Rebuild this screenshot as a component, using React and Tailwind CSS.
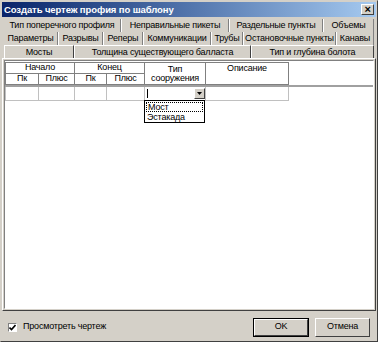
import React from 'react';

const font = { fontFamily: '"Liberation Sans", Arial, sans-serif' };

const row1 = [
    { label: 'Тип поперечного профиля', w: 117 },
    { label: 'Неправильные пикеты', w: 108 },
    { label: 'Раздельные пункты', w: 94 },
    { label: 'Объемы', w: 51 },
];
const row2 = [
    { label: 'Параметры', w: 54 },
    { label: 'Разрывы', w: 45 },
    { label: 'Реперы', w: 40 },
    { label: 'Коммуникации', w: 68 },
    { label: 'Трубы', w: 32 },
    { label: 'Остановочные пункты', w: 93 },
    { label: 'Канавы', w: 38 },
];
const row3 = [
    { label: 'Мосты', w: 70, active: true },
    { label: 'Толщина существующего балласта', w: 177 },
    { label: 'Тип и глубина болота', w: 123 },
];

const TabRow = ({ tabs, raised }) => (
    <div className="flex h-[13px] pl-[3px]">
        {tabs.map((t, i) => (
            <div
                key={t.label}
                className={
                    'flex items-center justify-center leading-none text-black whitespace-nowrap ' +
                    (raised
                        ? 'border-t border-l border-r border-t-white border-l-white border-r-[#404040] ' + (t.active ? 'bg-[#d4d0c8]' : '')
                        : (i > 0 ? 'border-l border-l-white ' : '') + 'border-r border-r-[#808080]')
                }
                style={{ width: t.w }}
            >
                {t.label}
            </div>
        ))}
    </div>
);

const Cell = ({ w, children, className = '' }) => (
    <div
        className={'flex items-center justify-center border-r border-b border-[#808080] leading-none whitespace-nowrap ' + className}
        style={{ width: w }}
    >
        {children}
    </div>
);

export default function App() {
    return (
        <div
            className="w-[378px] h-[342px] bg-[#d4d0c8] border border-t-[#d4d0c8] border-l-[#d4d0c8] border-r-[#404040] border-b-[#404040] flex flex-col text-[9px] tracking-[-0.2px] text-black overflow-hidden"
            style={font}
        >
            {/* title bar */}
            <div className="mx-[1px] mt-[1px] h-[15px] flex items-center justify-between bg-gradient-to-r from-[#0a246a] to-[#a6caf0] pl-[2px] pr-[2px]">
                <span className="text-white font-bold text-[9.5px] tracking-[-0.1px] leading-none whitespace-nowrap">Создать чертеж профия по шаблону</span>
                <div className="w-[13px] h-[11px] bg-[#d4d0c8] border border-t-white border-l-white border-r-[#404040] border-b-[#404040] flex items-center justify-center text-[11px] font-bold leading-none">
                    ×
                </div>
            </div>

            {/* tabs */}
            <div className="mt-[2px] flex flex-col">
                <TabRow tabs={row1} />
                <TabRow tabs={row2} />
                <TabRow tabs={row3} raised />
            </div>

            {/* page */}
            <div className="mx-[1px] h-[253px] border border-t-white border-l-white border-r-[#404040] border-b-[#404040] p-[1px]">
                <div className="h-full bg-white border border-t-[#808080] border-l-[#808080] border-r-white border-b-white relative">
                    <div className="border-b-2 border-[#a0a0a0] pt-[1px]">
                        <div className="flex h-[23px] w-[284px] border-l border-t border-[#808080]">
                            <div className="flex flex-col w-[69px]">
                                <Cell w={69} className="h-[11px]">Начало</Cell>
                                <div className="flex h-[12px]">
                                    <Cell w={33}>Пк</Cell>
                                    <Cell w={36}>Плюс</Cell>
                                </div>
                            </div>
                            <div className="flex flex-col w-[70px]">
                                <Cell w={70} className="h-[11px]">Конец</Cell>
                                <div className="flex h-[12px]">
                                    <Cell w={32}>Пк</Cell>
                                    <Cell w={38}>Плюс</Cell>
                                </div>
                            </div>
                            <Cell w={61} className="flex-col leading-[11px]">
                                <span>Тип</span>
                                <span>сооружения</span>
                            </Cell>
                            <Cell w={83} className="items-start pt-[1px]">Описание</Cell>
                        </div>
                    </div>
                    {/* data row */}
                    <div className="flex h-[14px] w-[284px] border-l border-[#c0c0c0]">
                        <div className="w-[33px] border-r border-b border-[#c0c0c0]" />
                        <div className="w-[36px] border-r border-b border-[#c0c0c0]" />
                        <div className="w-[32px] border-r border-b border-[#c0c0c0]" />
                        <div className="w-[38px] border-r border-b border-[#c0c0c0]" />
                        <div className="w-[61px] border-r border-b border-[#c0c0c0] flex items-center">
                            <div className="flex-1 h-[10px] ml-[2px] flex items-center">
                                <div className="w-[1px] h-[9px] bg-black" />
                            </div>
                            <div className="w-[11px] h-[11px] bg-[#d4d0c8] border border-t-white border-l-white border-r-[#404040] border-b-[#404040] flex items-center justify-center">
                                <svg width="5" height="3" viewBox="0 0 5 3">
                                    <path d="M0 0h5L2.5 3z" fill="#000" />
                                </svg>
                            </div>
                        </div>
                        <div className="w-[83px] border-r border-b border-[#c0c0c0]" />
                    </div>
                    {/* dropdown list */}
                    <div className="absolute left-[139px] top-[39px] w-[61px] bg-white border border-black flex flex-col leading-none">
                        <div className="h-[10px] mx-[1px] mt-[1px] border border-dotted border-black flex items-center pl-[1px]">Мост</div>
                        <div className="h-[10px] flex items-center pl-[2px]">Эстакада</div>
                    </div>
                </div>
            </div>

            {/* bottom */}
            <div className="flex items-center justify-between flex-1 px-[7px] pt-[2px]">
                <label className="flex items-center gap-[6px]">
                    <div className="w-[9px] h-[9px] bg-white border border-t-[#808080] border-l-[#808080] border-r-white border-b-white flex items-center justify-center">
                        <svg width="7" height="7" viewBox="0 0 7 7">
                            <path d="M0.5 3.5l2 2 4-4.5" stroke="#000" strokeWidth="1.6" fill="none" />
                        </svg>
                    </div>
                    <span className="whitespace-nowrap">Просмотреть чертеж</span>
                </label>
                <div className="flex gap-[6px]">
                    <div className="w-[56px] h-[19px] border border-black">
                        <div className="h-full border border-t-white border-l-white border-r-[#404040] border-b-[#404040] flex items-center justify-center">OK</div>
                    </div>
                    <div className="w-[55px] h-[19px] border border-t-white border-l-white border-r-[#404040] border-b-[#404040] flex items-center justify-center">
                        Отмена
                    </div>
                </div>
            </div>
        </div>
    );
}
